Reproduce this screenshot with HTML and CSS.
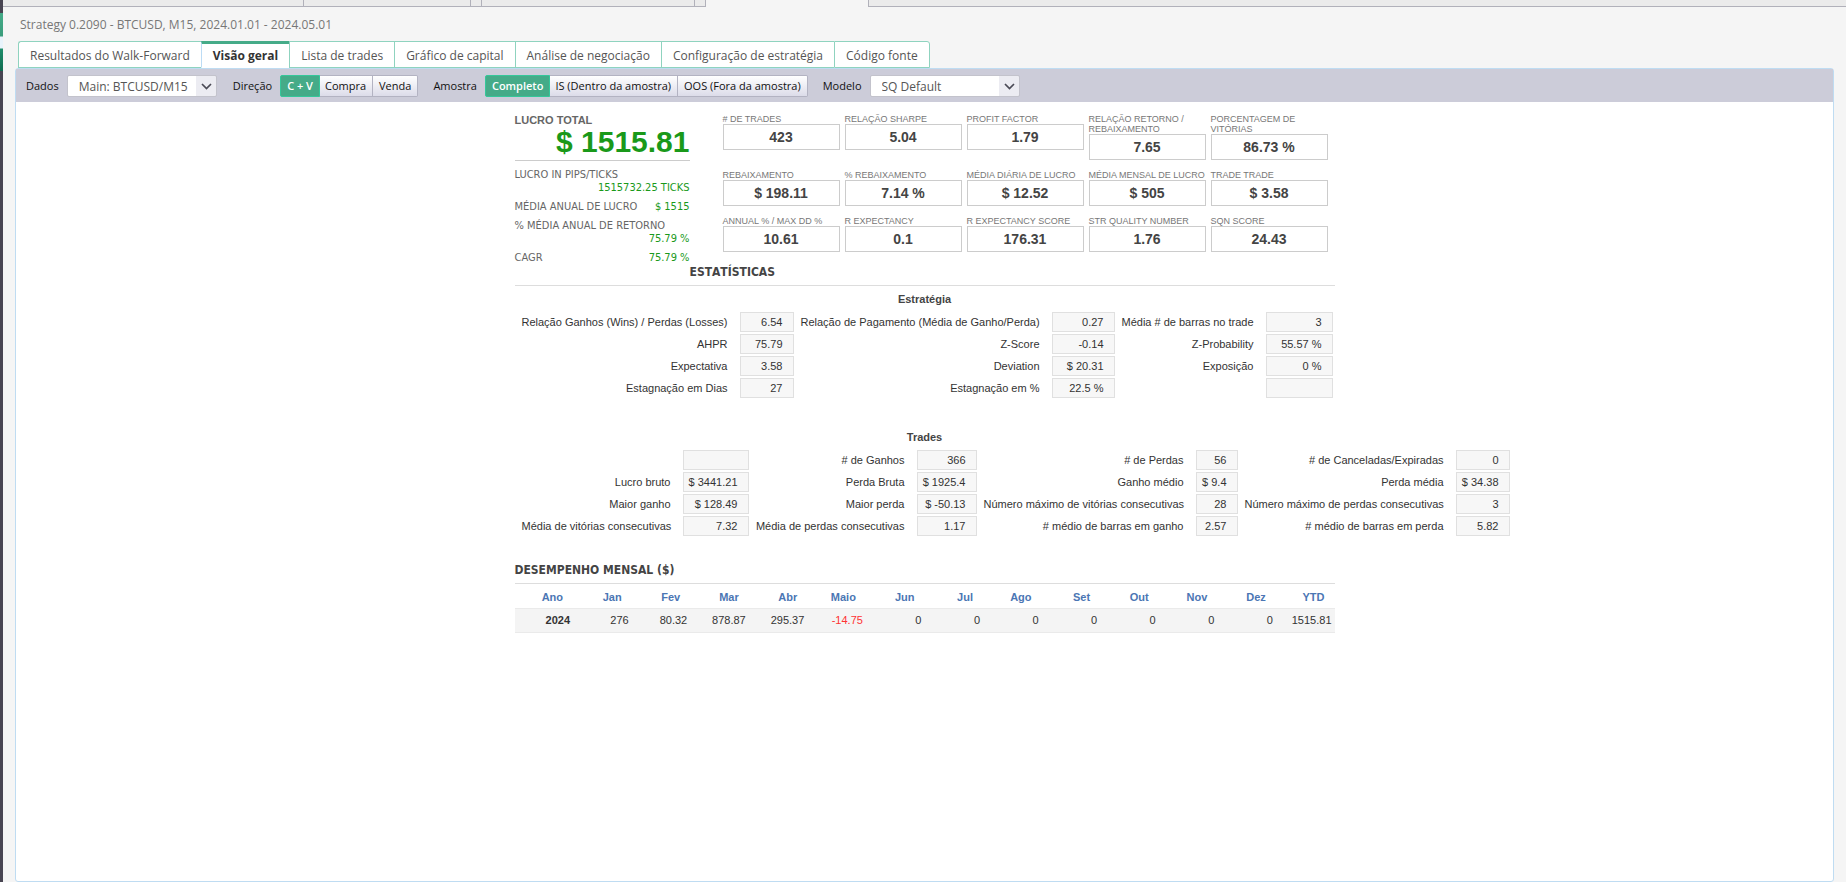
FILE: index.html
```html
<!DOCTYPE html>
<html lang="pt">
<head>
<meta charset="utf-8">
<title>Strategy 0.2090</title>
<link rel="stylesheet" href="styles.css">
</head>
<body>
<aside class="rail"></aside>
<div class="page">
  <div class="strip">
    <span class="seg seg-a"></span><span class="seg seg-b"></span><span class="seg seg-c"></span><span class="seg seg-d"></span><span class="seg seg-c"></span><span class="seg-gap"></span><span class="seg seg-rest"></span>
  </div>
  <h1 class="title">Strategy 0.2090 - BTCUSD, M15, 2024.01.01 - 2024.05.01</h1>
  <nav class="tabs">
    <button class="tab">Resultados do Walk-Forward</button>
    <button class="tab active">Visão geral</button>
    <button class="tab">Lista de trades</button>
    <button class="tab">Gráfico de capital</button>
    <button class="tab">Análise de negociação</button>
    <button class="tab">Configuração de estratégia</button>
    <button class="tab">Código fonte</button>
  </nav>
  <main class="panel">
    <div class="toolbar">
      <label class="tool-label" for="data">Dados</label>
      <span class="select select-data">
        <select id="data"><option>Main: BTCUSD/M15</option></select>
        <svg class="chevron" viewBox="0 0 20 20"><path d="M6 8l4.500 4.500L15 8" fill="none" stroke="#4a4a55" stroke-width="1.700"/></svg>
      </span>
      <span class="tool-label">Direção</span>
      <div class="group">
        <button class="btn on">C + V</button><button class="btn">Compra</button><button class="btn">Venda</button>
      </div>
      <span class="tool-label">Amostra</span>
      <div class="group">
        <button class="btn on">Completo</button><button class="btn">IS (Dentro da amostra)</button><button class="btn">OOS (Fora da amostra)</button>
      </div>
      <label class="tool-label" for="model">Modelo</label>
      <span class="select select-model">
        <select id="model"><option>SQ Default</option></select>
        <svg class="chevron" viewBox="0 0 20 20"><path d="M6 8l4.500 4.500L15 8" fill="none" stroke="#4a4a55" stroke-width="1.700"/></svg>
      </span>
    </div>

    <div class="report">
      <section class="summary">
        <div class="profit">
          <div class="profit-label">LUCRO TOTAL</div>
          <div class="profit-value">$ 1515.81</div>
          <div class="pair"><span>LUCRO IN PIPS/TICKS</span><b>1515732.25 TICKS</b></div>
          <div class="pair"><span>MÉDIA ANUAL DE LUCRO</span><b>$ 1515</b></div>
          <div class="pair"><span>% MÉDIA ANUAL DE RETORNO</span><b>75.79 %</b></div>
          <div class="pair"><span>CAGR</span><b>75.79 %</b></div>
        </div>
        <div class="metrics">
          <div class="metric"><span># DE TRADES</span><b>423</b></div>
          <div class="metric"><span>RELAÇÃO SHARPE</span><b>5.04</b></div>
          <div class="metric"><span>PROFIT FACTOR</span><b>1.79</b></div>
          <div class="metric"><span>RELAÇÃO RETORNO / REBAIXAMENTO</span><b>7.65</b></div>
          <div class="metric"><span>PORCENTAGEM DE VITÓRIAS</span><b>86.73 %</b></div>
          <div class="metric"><span>REBAIXAMENTO</span><b>$ 198.11</b></div>
          <div class="metric"><span>% REBAIXAMENTO</span><b>7.14 %</b></div>
          <div class="metric"><span>MÉDIA DIÁRIA DE LUCRO</span><b>$ 12.52</b></div>
          <div class="metric"><span>MÉDIA MENSAL DE LUCRO</span><b>$ 505</b></div>
          <div class="metric"><span>TRADE TRADE</span><b>$ 3.58</b></div>
          <div class="metric"><span>ANNUAL % / MAX DD %</span><b>10.61</b></div>
          <div class="metric"><span>R EXPECTANCY</span><b>0.1</b></div>
          <div class="metric"><span>R EXPECTANCY SCORE</span><b>176.31</b></div>
          <div class="metric"><span>STR QUALITY NUMBER</span><b>1.76</b></div>
          <div class="metric"><span>SQN SCORE</span><b>24.43</b></div>
        </div>
      </section>

      <h2 class="heading heading-stats">ESTATÍSTICAS</h2>

      <h3 class="subheading">Estratégia</h3>
      <table class="stats stats-strategy">
        <colgroup><col class="w221"><col class="w54"><col class="w254"><col class="w63"><col class="w147"><col class="w67"></colgroup>
        <tr><th>Relação Ganhos (Wins) / Perdas (Losses)</th><td>6.54</td><th>Relação de Pagamento (Média de Ganho/Perda)</th><td>0.27</td><th>Média # de barras no trade</th><td>3</td></tr>
        <tr><th>AHPR</th><td>75.79</td><th>Z-Score</th><td>-0.14</td><th>Z-Probability</th><td>55.57 %</td></tr>
        <tr><th>Expectativa</th><td>3.58</td><th>Deviation</th><td>$ 20.31</td><th>Exposição</th><td>0 %</td></tr>
        <tr><th>Estagnação em Dias</th><td>27</td><th>Estagnação em %</th><td>22.5 %</td><th></th><td></td></tr>
      </table>

      <h3 class="subheading">Trades</h3>
      <table class="stats stats-trades">
        <colgroup><col class="w164"><col class="w66"><col class="w164"><col class="w60"><col class="w215"><col class="w42"><col class="w214"><col class="w54"></colgroup>
        <tr><th></th><td></td><th># de Ganhos</th><td>366</td><th># de Perdas</th><td>56</td><th># de Canceladas/Expiradas</th><td>0</td></tr>
        <tr><th>Lucro bruto</th><td>$ 3441.21</td><th>Perda Bruta</th><td>$ 1925.4</td><th>Ganho médio</th><td>$ 9.4</td><th>Perda média</th><td>$ 34.38</td></tr>
        <tr><th>Maior ganho</th><td>$ 128.49</td><th>Maior perda</th><td>$ -50.13</td><th>Número máximo de vitórias consecutivas</th><td>28</td><th>Número máximo de perdas consecutivas</th><td>3</td></tr>
        <tr><th>Média de vitórias consecutivas</th><td>7.32</td><th>Média de perdas consecutivas</th><td>1.17</td><th># médio de barras em ganho</th><td>2.57</td><th># médio de barras em perda</th><td>5.82</td></tr>
      </table>

      <h2 class="heading">DESEMPENHO MENSAL ($)</h2>
      <table class="monthly">
        <thead><tr><th>Ano</th><th>Jan</th><th>Fev</th><th>Mar</th><th>Abr</th><th>Maio</th><th>Jun</th><th>Jul</th><th>Ago</th><th>Set</th><th>Out</th><th>Nov</th><th>Dez</th><th>YTD</th></tr></thead>
        <tbody><tr><td class="year">2024</td><td>276</td><td>80.32</td><td>878.87</td><td>295.37</td><td class="loss">-14.75</td><td>0</td><td>0</td><td>0</td><td>0</td><td>0</td><td>0</td><td>0</td><td>1515.81</td></tr></tbody>
      </table>
    </div>
  </main>
</div>
</body>
</html>
```
FILE: styles.css
```css
* { box-sizing: border-box; }

body {
  margin: 0;
  display: flex;
  min-height: 100vh;
  background: #f5f5f5;
  font-family: "Open Sans", sans-serif;
  font-size: 12px;
  color: #333;
}

button, select { font-family: inherit; margin: 0; }

.rail {
  width: 3px;
  background: linear-gradient(#484552 13px, #45ab88 13px, #3a9c7b 36px, #e8f3fb 37px, #e8f3fb 48px, #1f8d6b 49px, #0f6b50 71px, #484552 71px);
}

.page {
  flex: 1;
  min-width: 0;
  display: flex;
  flex-direction: column;
}

/* Lower edge of the outer tab row */
.strip { display: flex; height: 7px; }
.seg {
  background: #ebebeb;
  border-right: 1px solid #b1b1ba;
  border-bottom: 1px solid #b1b1ba;
}
.seg-a { width: 301px; }
.seg-b { width: 167px; }
.seg-c { width: 11px; }
.seg-d { width: 213px; }
.seg-gap { width: 162px; }
.seg-rest { flex: 1; border-left: 1px solid #b1b1ba; border-right: 0; }

.title {
  margin: 9px 0 8px 17px;
  font-size: 12px;
  line-height: 17px;
  font-weight: 400;
  color: #777;
}

.tabs { display: flex; margin-left: 15px; height: 27px; }
.tab {
  padding: 2px 11px 0;
  border: 1px solid #8fd3bf;
  border-right-width: 0;
  background: #fff;
  font-size: 12px;
  line-height: 24px;
  color: #555;
  white-space: nowrap;
}
.tab:first-child { border-radius: 3px 0 0 0; }
.tab:last-child { border-right-width: 1px; border-radius: 0 3px 0 0; }
.tab.active {
  padding-top: 0;
  border-top: 3px solid #45ab88;
  border-bottom-color: #fff;
  border-left-color: #bcdcf5;
  font-weight: 700;
  line-height: 20px;
  color: #333;
}

.panel {
  flex: 1;
  margin: 0 12px;
  border: 1px solid #bfdcf2;
  border-radius: 3px;
  background: #fff;
}

.toolbar {
  display: flex;
  align-items: center;
  height: 33px;
  padding-left: 10px;
  background: #ccccd9;
  font-size: 11px;
  color: #111;
}
.tool-label { margin-right: 8px; }

.select { position: relative; height: 22px; margin-right: 16px; }
.select-data { width: 150px; }
.select-model { width: 150px; }
.select select {
  width: 100%;
  height: 22px;
  padding: 1px 24px 0 11px;
  appearance: none;
  border: 1px solid #c3c3cc;
  border-radius: 2px;
  background: linear-gradient(to left, #ececf2 20px, #fff 20px);
  font-size: 12px;
  color: #555;
}
.chevron {
  position: absolute;
  top: 1px;
  right: 1px;
  width: 20px;
  height: 20px;
  pointer-events: none;
}

.group { display: flex; margin-right: 15px; }
.btn {
  height: 22px;
  padding: 0 6px;
  border: 1px solid #b3b3c2;
  border-left-width: 0;
  background: linear-gradient(#fff, #dcdce9);
  font-size: 11px;
  line-height: 20px;
  color: #111;
  white-space: nowrap;
}
.btn:nth-child(2) { padding-left: 5px; }
.btn:last-child { border-radius: 0 2px 2px 0; }
.btn.on {
  border: 1px solid #35c79a;
  border-radius: 2px 0 0 2px;
  background: #45ab88;
  font-weight: 600;
  color: #fff;
}

.report {
  width: 820px;
  margin: 12px auto 0;
  font-family: "Liberation Sans", Arial, sans-serif;
  font-size: 11px;
}

.summary { display: flex; gap: 33px; }

.profit { width: 175px; color: #666; font-family: "DejaVu Sans Condensed", "DejaVu Sans", sans-serif; }
.profit-label {
  font: bold 11px/13px "Liberation Sans", Arial, sans-serif;
}
.profit-value {
  margin-bottom: 7px;
  padding-bottom: 3px;
  border-bottom: 1px solid #ccc;
  font: bold 30px/30px "Liberation Sans", Arial, sans-serif;
  color: #1a991a;
  text-align: right;
}
.pair {
  display: flex;
  flex-wrap: wrap;
  margin-bottom: 6px;
  line-height: 13px;
}
.pair:last-child { margin-bottom: 0; }
.pair b { margin-left: auto; font-weight: 400; color: #1a991a; }

.metrics {
  display: grid;
  grid-template-columns: repeat(5, 117px);
  column-gap: 5px;
  align-content: start;
}
.metric { padding-bottom: 10px; color: #777; }
.metric span {
  display: block;
  font-size: 9px;
  line-height: 10px;
}
.metric b {
  display: block;
  border: 1px solid #ccc;
  font-size: 14px;
  line-height: 24px;
  text-align: center;
  color: #444;
}

.heading {
  margin: 0;
  padding-bottom: 5px;
  border-bottom: 1px solid #ddd;
  font: bold 12px/16px "DejaVu Sans Condensed", "DejaVu Sans", sans-serif;
  font-kerning: none;
  color: #444;
}
.heading-stats { padding-left: 175px; }

.subheading {
  margin: 6px 0 3px;
  font-size: 11px;
  line-height: 15px;
  text-align: center;
  color: #444;
}

.stats {
  table-layout: fixed;
  border-collapse: separate;
  border-spacing: 2px;
  margin-bottom: 30px;
  color: #333;
}
.stats-strategy { width: 820px; }
.stats-trades { width: 997px; margin-bottom: 24px; }
.stats th, .stats td {
  height: 20px;
  padding: 0 10px 0 5px;
  font-weight: 400;
  line-height: 18px;
  text-align: right;
  white-space: nowrap;
}
.stats td { padding-left: 0; border: 1px solid #e0e0e0; background: #f7f7f7; }
.w42 { width: 42px; }
.w54 { width: 54px; }
.w60 { width: 60px; }
.w63 { width: 63px; }
.w66 { width: 66px; }
.w67 { width: 67px; }
.w147 { width: 147px; }
.w164 { width: 164px; }
.w214 { width: 214px; }
.w215 { width: 215px; }
.w221 { width: 221px; }
.w254 { width: 254px; }

.monthly { width: 100%; table-layout: fixed; border-collapse: collapse; }
.monthly th { height: 24px; padding: 3px 10px 0 0; text-align: right; color: #4b76b4; }
.monthly td {
  height: 24px;
  padding: 0 3px 0 0;
  border-top: 1px solid #eaeaea;
  border-bottom: 1px solid #eaeaea;
  background: #f4f4f4;
  text-align: right;
}
.monthly .year { font-weight: 700; }
.monthly .loss { color: #f33; }
```
